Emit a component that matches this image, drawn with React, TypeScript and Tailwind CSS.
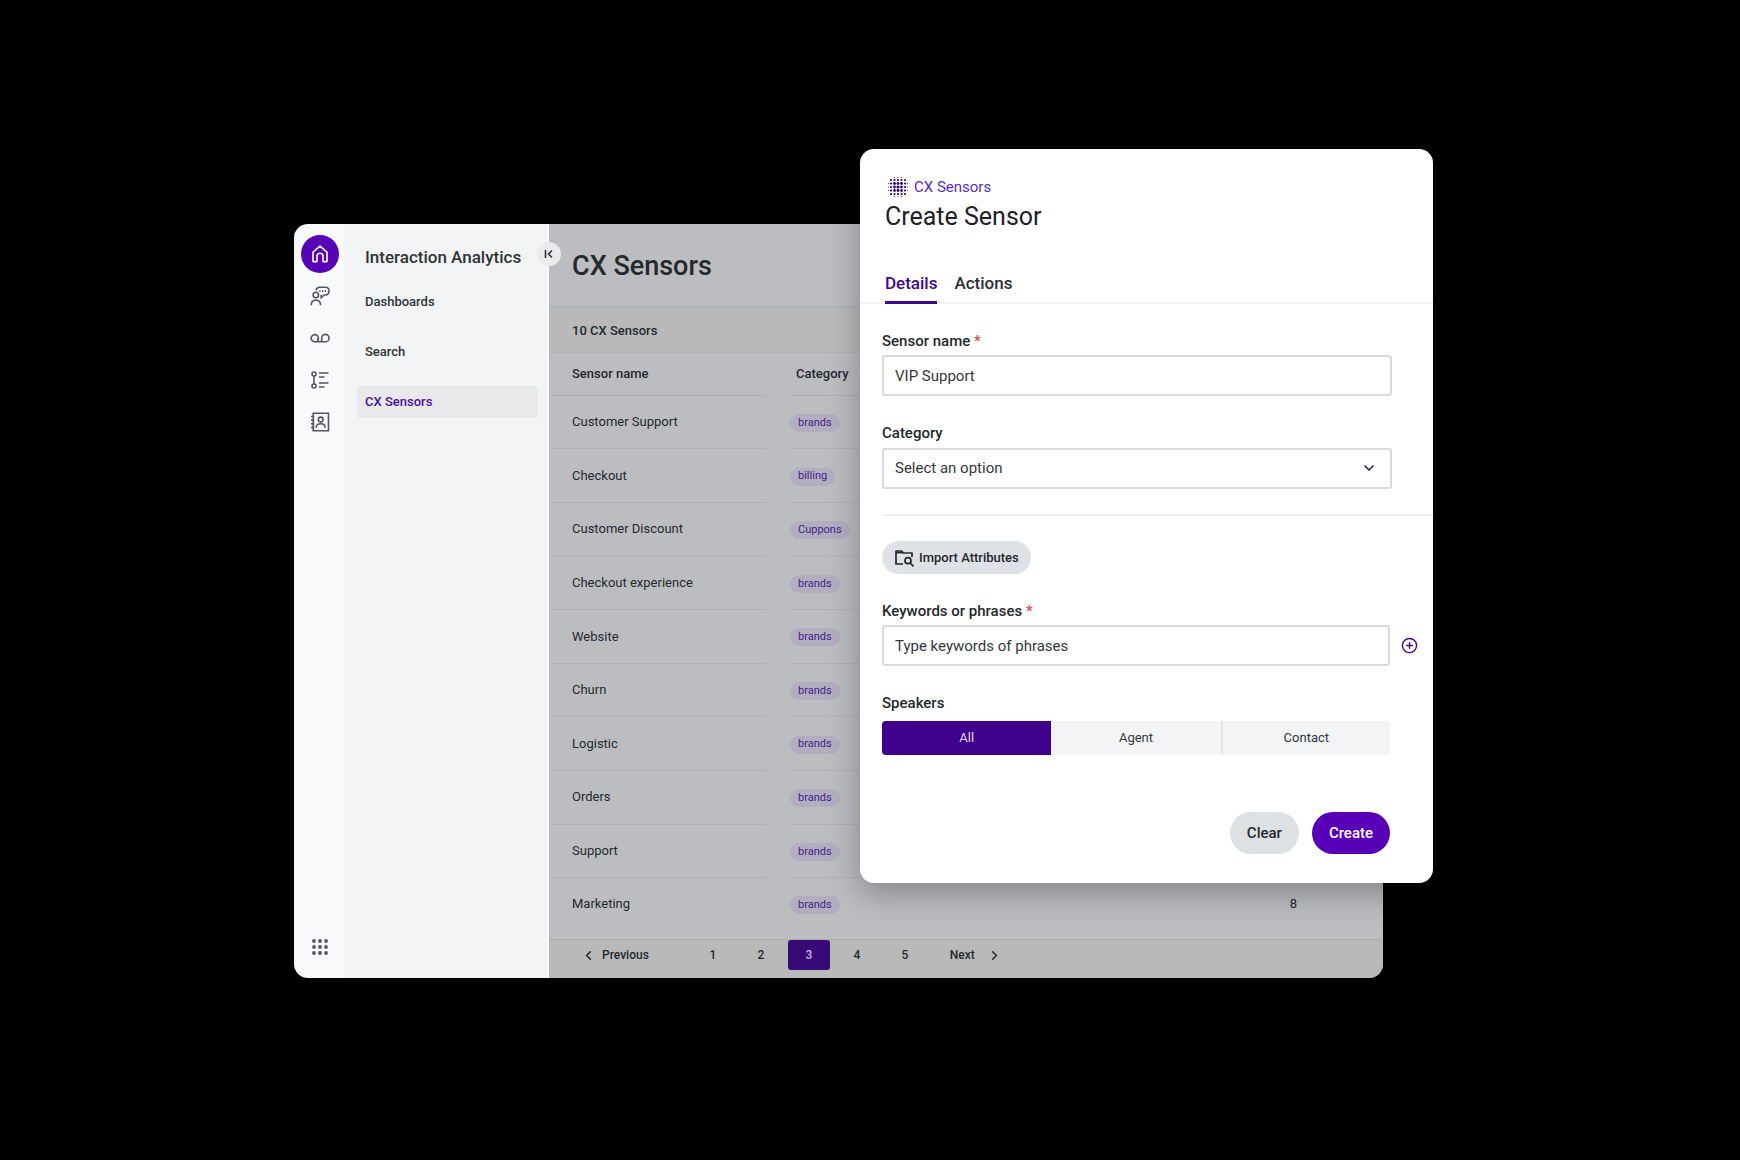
import { useState } from 'react';
import { ChevronDown, ChevronLeft, ChevronRight, CirclePlus } from 'lucide-react';

const sensors = [
  { name: 'Customer Support', category: 'brands' },
  { name: 'Checkout', category: 'billing' },
  { name: 'Customer Discount', category: 'Cuppons' },
  { name: 'Checkout experience', category: 'brands' },
  { name: 'Website', category: 'brands' },
  { name: 'Churn', category: 'brands' },
  { name: 'Logistic', category: 'brands' },
  { name: 'Orders', category: 'brands' },
  { name: 'Support', category: 'brands' },
  { name: 'Marketing', category: 'brands', count: 8 },
];

const navLinks = ['Dashboards', 'Search', 'CX Sensors'];
const speakers = ['All', 'Agent', 'Contact'];
const pages = [1, 2, 3, 4, 5];

const iconProps = {
  width: 20,
  height: 20,
  viewBox: '0 0 20 20',
  fill: 'none',
  stroke: 'currentColor',
  strokeWidth: 1.6,
  'aria-hidden': true,
};

function HomeIcon() {
  return (
    <svg {...iconProps} strokeLinejoin="round">
      <path d="M3 17.6V8.200L10 2.200l7 6v9.400h-4v-5.400c0-1.700-1.200-2.900-3-2.900s-3 1.200-3 2.900v5.400z" />
    </svg>
  );
}

function AgentIcon() {
  return (
    <svg {...iconProps}>
      <circle cx="5.8" cy="9" r="2.7" />
      <path d="M1.200 19.300c0-3.400 2-5.200 4.600-5.200s4.800 1.800 4.800 5.200" />
      <path d="M6 4.400C6.300 2.300 7.600 1.200 9.600 1.200h5.600c2.400 0 3.900 1.500 3.900 3.900s-1.500 3.900-3.900 3.900h-.8l-3.200 2.600V8.800" />
      <path d="M9.300 5.100h1.300M12 5.100h1.300M14.700 5.100H16" />
    </svg>
  );
}

function VoicemailIcon() {
  return (
    <svg {...iconProps}>
      <path d="M7.400 12.600A3.600 3.600 0 1 0 4.600 13.800H15.400A3.700 3.700 0 1 0 11.700 10v3.800" />
      <path d="M8.200 10v3.800" />
    </svg>
  );
}

function TimelineIcon() {
  return (
    <svg {...iconProps}>
      <circle cx="4" cy="4" r="2" />
      <circle cx="4" cy="16" r="2" />
      <path d="M4 6v8M9 3h9.500M9 7h5.500M9 13h9.500M9 17h5.500" />
    </svg>
  );
}

function ContactsIcon() {
  return (
    <svg {...iconProps}>
      <path d="M3.200 1.300h15.300v17.400H3.200z" />
      <path d="M1 4.500h3.400M1 8.200h3.400M1 11.800h3.400M1 15.500h3.400" />
      <circle cx="10.700" cy="7.500" r="2.400" />
      <path d="M6.200 15.800c0-2.700 1.900-4 4.500-4s4.500 1.300 4.500 4" />
    </svg>
  );
}

function AppsIcon() {
  return (
    <svg width="16" height="16" viewBox="0 0 16 16" fill="currentColor" aria-hidden>
      {[2, 8, 14].map((cy) => [2, 8, 14].map((cx) => <circle key={`${cx}-${cy}`} cx={cx} cy={cy} r="1.900" />))}
    </svg>
  );
}

function SensorsIcon() {
  const steps = [-2, -1, 0, 1, 2];
  return (
    <svg width="20" height="20" viewBox="-10 -10 20 20" fill="#2e0270" aria-hidden>
      {steps.map((y) =>
        steps.map((x) => (
          <circle key={`${x},${y}`} cx={x * 3.5} cy={y * 3.5} r={[1.6, 1.4, 1.1][Math.max(Math.abs(x), Math.abs(y))]} />
        ))
      )}
      {[-1, 0, 1].map((n) => (
        <g key={n}>
          <circle cx={n * 3.5} cy="-9.500" r=".5" />
          <circle cx={n * 3.5} cy="9.500" r=".5" />
          <circle cx="-9.500" cy={n * 3.5} r=".5" />
          <circle cx="9.500" cy={n * 3.5} r=".5" />
        </g>
      ))}
    </svg>
  );
}

function FolderSearchIcon() {
  return (
    <svg {...iconProps} strokeWidth={1.7} strokeLinejoin="round">
      <path d="M9 16H2V3h5.500l2 2H18v4" />
      <path d="M2 4.600h7" />
      <circle cx="14" cy="12.700" r="3" />
      <path d="m16.200 15 3.300 3.300" />
    </svg>
  );
}

function CollapseIcon() {
  return (
    <svg width="12" height="12" viewBox="0 0 12 12" fill="none" stroke="currentColor" strokeWidth="1.600" aria-hidden>
      <path d="M2.500 2v8M9 2.500 5.500 6 9 9.500" />
    </svg>
  );
}

const railItems = [
  { label: 'Conversations', icon: <AgentIcon /> },
  { label: 'Voicemail', icon: <VoicemailIcon /> },
  { label: 'Workflows', icon: <TimelineIcon /> },
  { label: 'Contacts', icon: <ContactsIcon /> },
];

function Rail() {
  return (
    <div className="flex w-[50px] shrink-0 flex-col items-center bg-[#f8f9fb] pt-[11px] pb-[23px] pl-0.5 text-[#54585e]">
      <button aria-label="Home" className="flex h-[38px] w-[38px] items-center justify-center rounded-full bg-[#5700b8] text-white">
        <HomeIcon />
      </button>
      <div className="mt-[13px] flex flex-col gap-[22px]">
        {railItems.map((item) => (
          <button key={item.label} aria-label={item.label}>
            {item.icon}
          </button>
        ))}
      </div>
      <button aria-label="Apps" className="mt-auto">
        <AppsIcon />
      </button>
    </div>
  );
}

function SideNav() {
  return (
    <nav className="relative w-[205px] shrink-0 border-r-2 border-[#f8fafc] bg-[#f2f4f6] pt-[21px] pr-[9px] pl-[13px] font-medium text-[#2f3338]">
      <h2 className="px-2 text-[17px] leading-6">Interaction Analytics</h2>
      <ul className="mt-[17px] flex flex-col gap-[18px] text-[13px]">
        {navLinks.map((link) => (
          <li key={link}>
            <a
              href="#"
              className={
                link === 'CX Sensors'
                  ? 'flex h-8 items-center rounded-sm bg-[#e9e8eb] px-2 text-[#4a1396]'
                  : 'flex h-8 items-center px-2'
              }
            >
              {link}
            </a>
          </li>
        ))}
      </ul>
      <button
        aria-label="Collapse menu"
        className="absolute top-[18px] -right-[14px] z-10 flex h-6 w-6 items-center justify-center rounded-full bg-[#eaebed] text-[#2f3338]"
      >
        <CollapseIcon />
      </button>
    </nav>
  );
}

function SensorsPage() {
  return (
    <main className="flex min-w-0 flex-1 flex-col bg-[#bcbdc1] text-[#24292e]">
      <div className="border-b-2 border-[#b2b4b9] pt-[26px] pb-6 pl-[23px]">
        <h1 className="text-[27px] leading-8 font-medium">CX Sensors</h1>
      </div>
      <p className="border-b border-[#b2b4b9] bg-[#b9b9ba] pt-3.5 pb-3 pl-[23px] text-[13px] leading-[18px] font-medium">10 CX Sensors</p>

      <table className="ml-[3px] h-[577px] table-fixed text-left text-[13px]">
        <colgroup>
          <col className="w-[215px]" />
          <col className="w-[25px]" />
          <col className="w-[390px]" />
          <col />
        </colgroup>
        <thead>
          <tr className="h-[42px]">
            <th className="border-b border-[#aeb0b5] pl-5 font-medium">Sensor name</th>
            <td />
            <th className="border-b border-[#aeb0b5] pl-1 font-medium">Category</th>
            <td />
          </tr>
        </thead>
        <tbody>
          {sensors.map((sensor, i) => (
            <tr key={sensor.name}>
              <td className={i < sensors.length - 1 ? 'border-b border-[#b0b2b7] pl-5' : 'pl-5'}>{sensor.name}</td>
              <td />
              <td className={i < sensors.length - 1 ? 'border-b border-[#b0b2b7]' : ''}>
                <span className="-ml-0.5 inline-flex h-[18px] items-center rounded-full bg-[#b3aebf] px-2 text-[11px] text-[#45208c]">
                  {sensor.category}
                </span>
              </td>
              <td className="pr-[86px] text-right">{sensor.count}</td>
            </tr>
          ))}
        </tbody>
      </table>

      <div className="mt-auto flex h-[39px] items-start border-t border-[#aaacb0] bg-[#b9b9ba] pl-[32px] text-[12px] font-medium">
        <button className="flex h-[30px] items-center gap-1.5">
          <ChevronLeft size={15} strokeWidth={2.5} />
          Previous
        </button>
        <div className="ml-[43px] flex gap-1.5">
          {pages.map((page) => (
            <button key={page} className={page === 3 ? 'h-[30px] w-[42px] rounded-[3px] bg-[#370a75] text-[#c4b2e0]' : 'h-[30px] w-[42px]'}>
              {page}
            </button>
          ))}
        </div>
        <button className="ml-6 flex h-[30px] items-center gap-3">
          Next
          <ChevronRight size={15} strokeWidth={2.5} />
        </button>
      </div>
    </main>
  );
}

const fieldClass =
  'h-[41px] w-full rounded-[3px] border-2 border-[#d9dadb] bg-white px-[11px] text-[15px] text-[#34383d] outline-none placeholder:text-[#34383d]';
const labelClass = 'block text-[15px] leading-[18px] font-medium text-[#24282d]';

function CreateSensor() {
  const [tab, setTab] = useState('Details');
  const [name, setName] = useState('VIP Support');
  const [speaker, setSpeaker] = useState('All');

  return (
    <form
      onSubmit={(e) => e.preventDefault()}
      className="absolute top-0 right-0 z-20 w-[573px] rounded-[14px] bg-white pb-[29px] shadow-[0_10px_32px_rgba(0,0,0,0.3)]"
    >
      <div className="border-b-2 border-[#f2f2f4] pt-7 pl-[25px]">
        <p className="flex items-center gap-1.5 pl-[3px] text-[15px] leading-5 text-[#5a2ac0]">
          <SensorsIcon />
          CX Sensors
        </p>
        <h2 className="mt-1 text-[25px] leading-8 text-[#202226]">Create Sensor</h2>
        <div className="-mb-0.5 mt-10 flex gap-[17px] text-[17px] leading-5 font-medium">
          {['Details', 'Actions'].map((item) => (
            <button
              key={item}
              type="button"
              onClick={() => setTab(item)}
              className={
                tab === item
                  ? 'border-b-[3px] border-[#3f0a8c] pb-2 text-[#3f0a8c]'
                  : 'border-b-[3px] border-transparent pb-2 text-[#2a2e33]'
              }
            >
              {item}
            </button>
          ))}
        </div>
      </div>

      <div className="pt-7 pr-[41px] pl-[22px]">
        <label htmlFor="sensor-name" className={labelClass}>
          Sensor name <span className="text-[#e0444c]">*</span>
        </label>
        <input id="sensor-name" value={name} onChange={(e) => setName(e.target.value)} className={`mt-[5px] ${fieldClass}`} />

        <label htmlFor="category" className={`mt-7 ${labelClass}`}>
          Category
        </label>
        <div className="relative mt-1.5">
          <select id="category" className={`appearance-none ${fieldClass}`}>
            <option>Select an option</option>
            <option>brands</option>
            <option>billing</option>
          </select>
          <ChevronDown size={16} strokeWidth={2.5} className="pointer-events-none absolute top-3 right-[15px] text-[#24282d]" />
        </div>
      </div>

      <div className="mt-[25px] ml-[22px] border-t-2 border-[#eff0f1]" />

      <div className="pt-[25px] pr-[43px] pl-[22px]">
        <button
          type="button"
          className="flex h-[33px] items-center gap-[5px] rounded-full bg-[#dee1e5] px-3 text-[13px] font-medium text-[#24282d]"
        >
          <FolderSearchIcon />
          Import Attributes
        </button>

        <label htmlFor="keywords" className={`mt-7 ${labelClass}`}>
          Keywords or phrases <span className="text-[#e0444c]">*</span>
        </label>
        <div className="relative mt-[5px]">
          <input id="keywords" placeholder="Type keywords of phrases" className={fieldClass} />
          <button type="button" aria-label="Add keyword" className="absolute top-3 -right-7 text-[#3f0a8c]">
            <CirclePlus size={17} />
          </button>
        </div>

        <fieldset className="mt-7">
          <legend className={labelClass}>Speakers</legend>
          <div className="mt-[9px] grid grid-cols-3 overflow-hidden rounded-[4px] bg-[#f2f4f5] text-[13px] text-[#34383d]">
            {speakers.map((item, i) => (
              <label key={item} className={i === 2 ? 'border-l-2 border-[#e2e5e8]' : ''}>
                <input
                  type="radio"
                  name="speaker"
                  checked={speaker === item}
                  onChange={() => setSpeaker(item)}
                  className="peer sr-only"
                />
                <span className="flex h-[34px] items-center justify-center peer-checked:bg-[#3f008c] peer-checked:text-[#e2d5f5]">{item}</span>
              </label>
            ))}
          </div>
        </fieldset>

        <div className="mt-[57px] flex justify-end gap-[13px] text-[15px] font-medium">
          <button type="reset" className="h-[42px] rounded-full bg-[#dee1e4] px-[17px] text-[#24282d]">
            Clear
          </button>
          <button type="submit" className="h-[42px] rounded-full bg-[#5700b8] px-[17px] text-white">
            Create
          </button>
        </div>
      </div>
    </form>
  );
}

export default function App() {
  return (
    <div className="min-h-screen bg-black pt-[149px] pr-[307px] pb-[181px] pl-[294px] font-['Roboto',sans-serif]">
      <div className="relative pt-[75px]">
        <div className="mr-[50px] flex min-h-[754px] overflow-hidden rounded-[14px]">
          <Rail />
          <SideNav />
          <SensorsPage />
        </div>
        <CreateSensor />
      </div>
    </div>
  );
}
